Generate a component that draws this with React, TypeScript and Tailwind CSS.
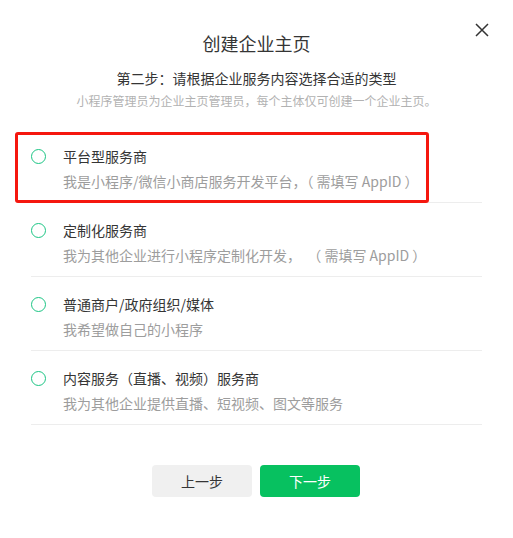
import React from "react";

const items = [
  { t: "平台型服务商", d: "我是小程序/微信小商店服务开发平台，（ 需填写 AppID ）", hl: true },
  { t: "定制化服务商", d: "我为其他企业进行小程序定制化开发，  （ 需填写 AppID ）" },
  { t: "普通商户/政府组织/媒体", d: "我希望做自己的小程序" },
  { t: "内容服务（直播、视频）服务商", d: "我为其他企业提供直播、短视频、图文等服务" },
];

export default function App() {
  return (
    <div
      className="relative w-[513px] h-[538px] bg-white"
      style={{ fontFamily: '"Noto Sans CJK SC", "Noto Sans", sans-serif' }}
    >
      <button className="absolute left-[475px] top-[23px] w-[14px] h-[14px]">
        <svg width="14" height="14" viewBox="0 0 14 14">
          <path d="M1 1 L13 13 M13 1 L1 13" stroke="#333" strokeWidth="1.5" />
        </svg>
      </button>
      <div className="flex flex-col items-center pt-[31px]">
        <div className="text-[18px] leading-[24px] text-[#353535]">创建企业主页</div>
        <div className="mt-[13px] text-[14px] leading-[20px] text-[#353535]">
          第二步：请根据企业服务内容选择合适的类型
        </div>
        <div className="mt-[4px] text-[12px] leading-[18px] text-[#b2b2b2]">
          小程序管理员为企业主页管理员，每个主体仅可创建一个企业主页。
        </div>
      </div>
      <div className="mx-[31px] mt-[19px] flex flex-col">
        {items.map((it) => (
          <div key={it.t} className="relative flex border-b border-[#ededed] pt-[16px] pb-[10px]">
            <div className="mt-[4px] mr-[17px] w-[15px] h-[15px] shrink-0 rounded-full border-[1.5px] border-[#1bc584]" />
            <div className="flex flex-col">
              <div className="text-[14px] leading-[22px] text-[#353535]">{it.t}</div>
              <div className="mt-[3px] text-[14px] leading-[22px] text-[#9d9d9d] whitespace-pre">{it.d}</div>
            </div>
            {it.hl && (
              <div className="absolute left-[-16px] right-[53px] top-[3px] bottom-[-1px] border-[3px] border-[#f5170f] rounded-[3px]" />
            )}
          </div>
        ))}
      </div>
      <div className="mt-[40px] flex justify-center gap-[8px] pr-[1px]">
        <button className="w-[100px] h-[32px] rounded-[4px] bg-[#f0f0f0] text-[14px] text-[#353535]">上一步</button>
        <button className="w-[100px] h-[32px] rounded-[4px] bg-[#07c160] text-[14px] text-white">下一步</button>
      </div>
    </div>
  );
}
